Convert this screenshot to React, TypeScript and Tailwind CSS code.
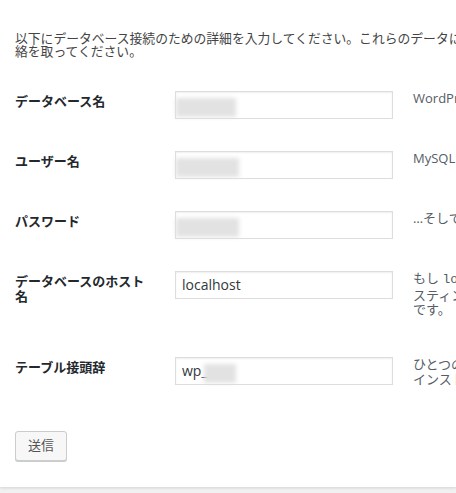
const jp = { fontFamily: '"Open Sans", "Noto Sans CJK JP", sans-serif' }

type Row = {
  label: React.ReactNode
  value?: string
  blur?: { left: number; width: number }
  desc: React.ReactNode
  height: string
}

const rows: Row[] = [
  {
    label: 'データベース名',
    blur: { left: 0, width: 60 },
    desc: 'WordPress で使用したいデータベース名。',
    height: 'h-[60px]',
  },
  {
    label: 'ユーザー名',
    blur: { left: 0, width: 63 },
    desc: 'MySQL のユーザー名',
    height: 'h-[60px]',
  },
  {
    label: 'パスワード',
    blur: { left: 0, width: 63 },
    desc: '…そして MySQL のパスワード。',
    height: 'h-[60px]',
  },
  {
    label: (
      <>
        データベースのホスト
        <br />名
      </>
    ),
    value: 'localhost',
    desc: (
      <>
        もし <code className="font-['Liberation_Mono',monospace] text-[13px]">localhost</code> が動作しない場合には、ウェブホ
        <br />
        スティングサービスから情報を入手できるはず
        <br />
        です。
      </>
    ),
    height: 'h-[86px]',
  },
  {
    label: 'テーブル接頭辞',
    value: 'wp_',
    blur: { left: 28, width: 32 },
    desc: (
      <>
        ひとつのデータベースに複数の WordPress を
        <br />
        インストールしたい場合、これを変えてください。
      </>
    ),
    height: 'h-[60px]',
  },
]

function Field({ row }: { row: Row }) {
  return (
    <div className={`flex items-start pt-4 ${row.height}`}>
      <div className="w-[160px] shrink-0 pt-[3px] text-[13px] leading-[15px] font-bold text-[#23282d]">
        {row.label}
      </div>
      <div className="relative w-[218px] h-[28px] shrink-0 border border-[#dddddd] bg-white shadow-[inset_0_1px_2px_rgba(0,0,0,0.07)]">
        {row.value && (
          <span className="absolute left-[6px] top-[3px] text-[14px] leading-[20px] text-[#32373c]">
            {row.value}
          </span>
        )}
        {row.blur && (
          <div
            className="absolute top-[6px] h-[19px] bg-[#e2e2e2] blur-[2px]"
            style={{ left: row.blur.left, width: row.blur.width }}
          />
        )}
      </div>
      <div className="ml-[20px] shrink-0 whitespace-nowrap text-[13px] leading-[14.5px] text-[#555d66]">
        {row.desc}
      </div>
    </div>
  )
}

export default function App() {
  return (
    <div className="w-[456px] h-[493px] overflow-hidden bg-[#f1f1f1]" style={jp}>
      <div className="bg-white pl-[15px] pt-[32px] pb-[26px] shadow-[0_1px_3px_rgba(0,0,0,0.13)]">
        <p className="whitespace-nowrap text-[12.8px] leading-[13px] text-[#444444]">
          以下にデータベース接続のための詳細を入力してください。これらのデータについて分からない点があれば、ホストに連
          <br />
          絡を取ってください。
        </p>
        <div className="mt-[17px]">
          {rows.map((row, i) => (
            <Field key={i} row={row} />
          ))}
        </div>
        <button className="mt-[30px] h-[30px] px-[12px] rounded-[3px] border border-[#cccccc] bg-[#f7f7f7] text-[13px] text-[#555555] shadow-[0_1px_0_#cccccc]">
          送信
        </button>
      </div>
    </div>
  )
}
